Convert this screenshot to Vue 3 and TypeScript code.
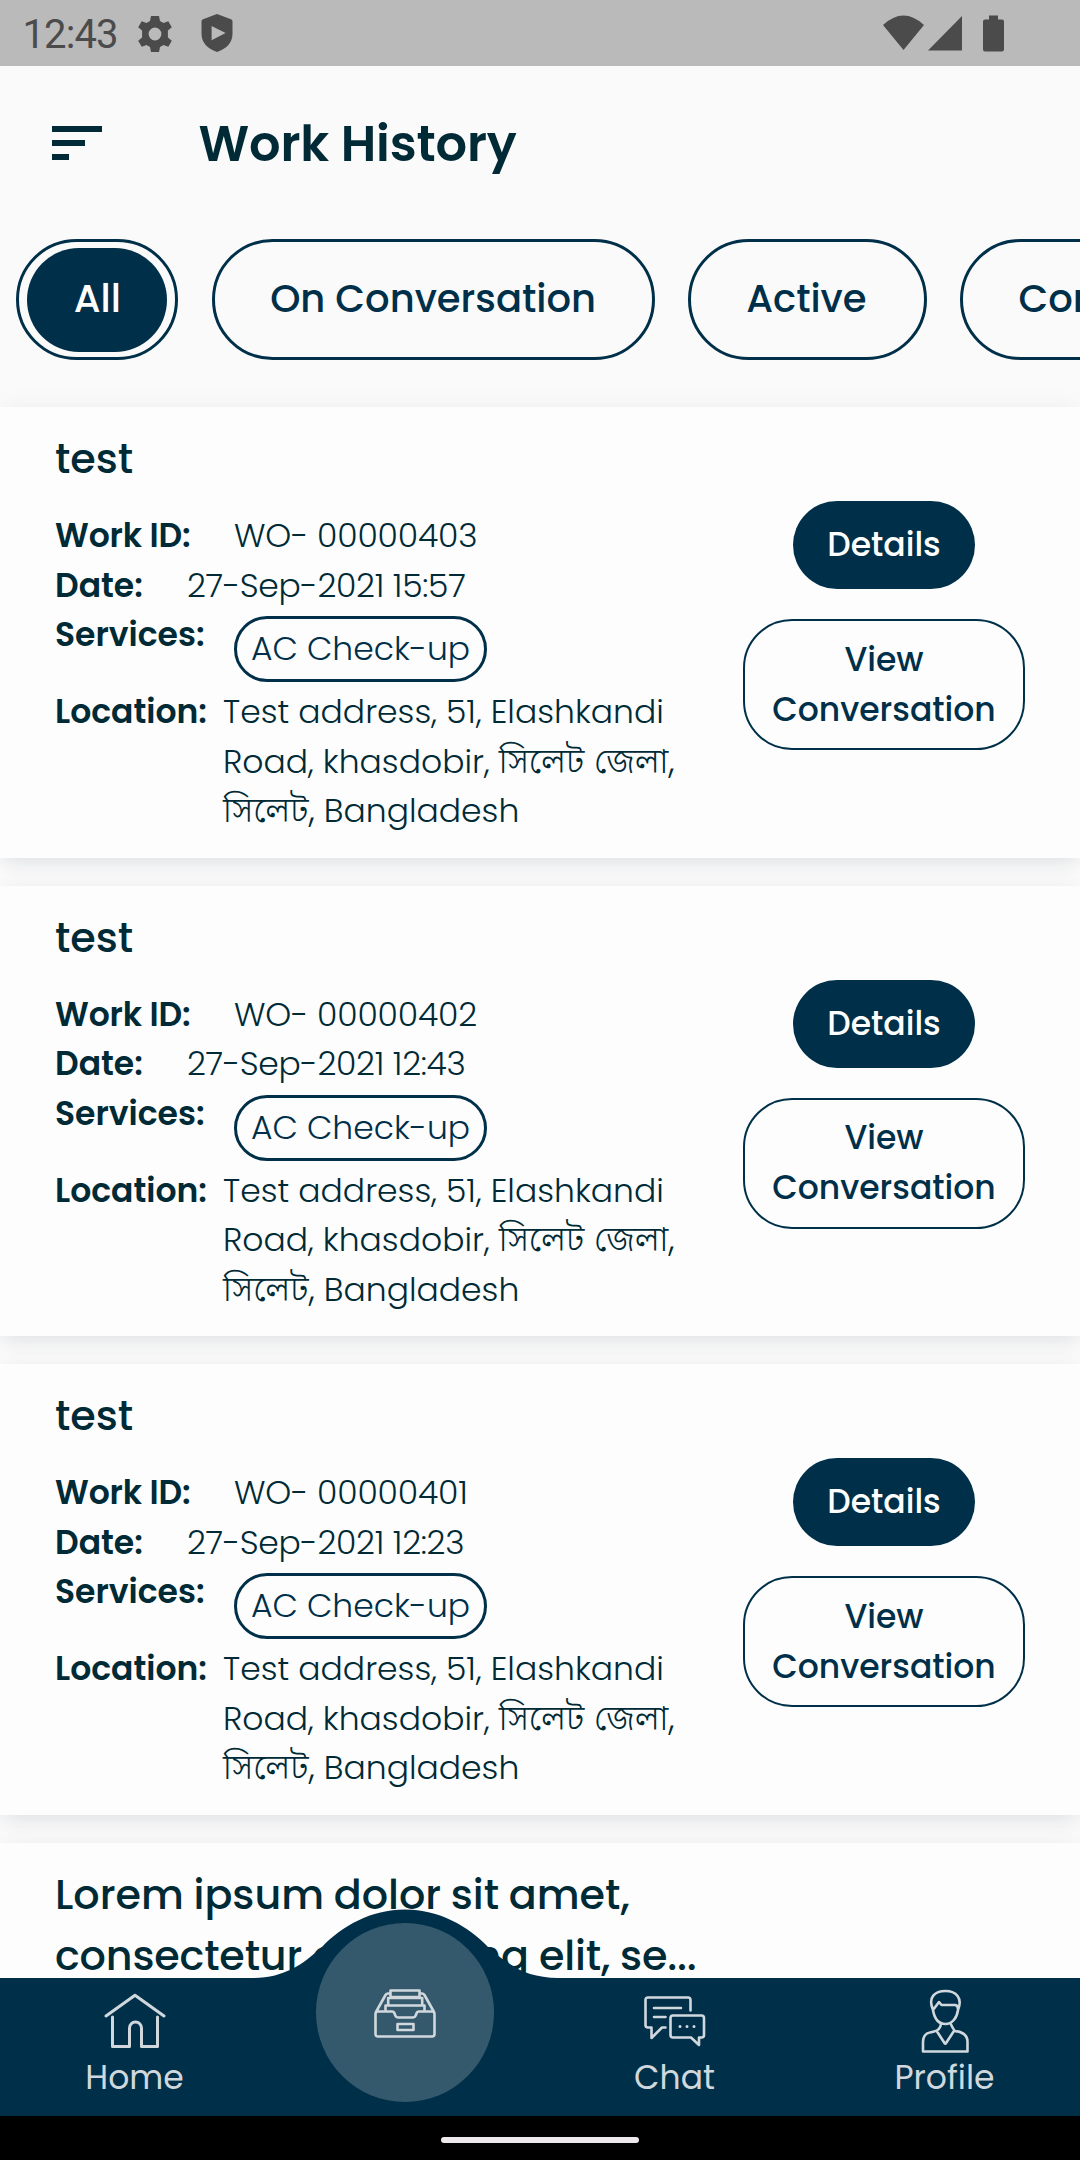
<script setup lang="ts">
interface Job {
  title: string[]
  id?: string
  date?: string
}

const filters: { label: string; key: string }[] = [
  { label: 'All', key: 'all' },
  { label: 'On Conversation', key: 'talk' },
  { label: 'Active', key: 'active' },
  { label: 'Completed', key: 'done' },
]

const jobs: Job[] = [
  { title: ['test'], id: 'WO- 00000403', date: '27-Sep-2021 15:57' },
  { title: ['test'], id: 'WO- 00000402', date: '27-Sep-2021 12:43' },
  { title: ['test'], id: 'WO- 00000401', date: '27-Sep-2021 12:23' },
  { title: ['Lorem ipsum dolor sit amet,', 'consectetur adipiscing elit, se...'] },
]
</script>

<template>
  <div class="screen">
    <div class="status">
      <span class="clock">12:43</span>
      <svg class="gear" width="34" height="36" viewBox="0 0 34 36">
        <path fill-rule="evenodd" d="M13 0h8l1 5 3.500 2 4.800-1.800 3.500 6-3.900 3.400v6.800l3.900 3.400-3.500 6L25.500 29 22 31l-1 5h-8l-1-5-3.500-2-4.800 1.800-3.500-6 3.900-3.400v-6.800L.2 11.200l3.500-6L8.500 7 12 5zM17 11.600a6.400 6.400 0 1 0 0 12.800a6.400 6.400 0 1 0 0-12.800z" />
      </svg>
      <svg class="shield" width="32" height="38" viewBox="0 0 32 38">
        <path fill-rule="evenodd" d="M16 0l14 5.200q1.500.6 1.500 2.200v12q0 13-15.500 18.600Q.5 32.400.5 19.400v-12q0-1.600 1.500-2.200zM10.600 12v14.200L24.600 19z" />
      </svg>
      <svg class="radio" width="122" height="38" viewBox="0 0 122 38">
        <path d="M0 10Q20.500-9 41 10L20.500 35z" />
        <path d="M45 35.500L79 1v34.500z" />
        <path d="M106 .5h9v4h4q2 0 2 2v28q0 2-2 2h-17q-2 0-2-2v-28q0-2 2-2h4z" />
      </svg>
    </div>

    <header class="topbar">
      <svg class="menu" width="50" height="34" viewBox="0 0 50 34">
        <path d="M0 0h50v6H0zM0 14h33v6H0zM0 28h17v6H0z" />
      </svg>
      <h1>Work History</h1>
    </header>

    <div class="filters">
      <button v-for="f in filters" :key="f.key" class="chip" :class="f.key"><span>{{ f.label }}</span></button>
    </div>

    <main class="list">
      <article v-for="(job, i) in jobs" :key="i" class="card">
        <div class="info">
          <h2><span v-for="t in job.title" :key="t">{{ t }}</span></h2>
          <template v-if="job.id">
            <div class="row"><b class="l-id">Work ID:</b><span class="id">{{ job.id }}</span></div>
            <div class="row"><b class="l-date">Date:</b><span class="date">{{ job.date }}</span></div>
            <div class="row services"><b class="l-serv">Services:</b><span class="service">AC Check-up</span></div>
            <div class="row">
              <b class="l-loc">Location:</b>
              <div class="address">
                <div>Test address, 51, Elashkandi</div>
                <div>Road, khasdobir, <span class="bn">সিলেট জেলা,</span></div>
                <div><span class="bn">সিলেট,</span> Bangladesh</div>
              </div>
            </div>
          </template>
        </div>
        <div v-if="job.id" class="actions">
          <button class="details">Details</button>
          <button class="view"><span>View</span><span>Conversation</span></button>
        </div>
      </article>
    </main>

    <nav class="tabs">
      <svg class="bump" width="306" height="72" viewBox="0 0 306 72">
        <path d="M0 69C32 69 50 56 70 38C90 17 119 .5 153 .5S216 17 236 38C256 56 274 69 306 69V72H0z" />
      </svg>
      <a class="tab">
        <svg width="62" height="62" viewBox="0 0 62 62" class="line">
          <path d="M2 27L31 6.200 60 27M8.500 28v29.500h17V39a5.500 5.500 0 0 1 12 0v18.500h16V28" />
        </svg>
        <span>Home</span>
      </a>
      <a class="tab">
        <span class="disc">
          <svg width="62" height="50" viewBox="0 0 62 50" class="line thin">
            <path d="M16.500 8V1.500h29V8M16.500 8h29M14.200 16V9h34v7M11.500 22.500V16.500h39v6M2 23L11.500 6q1-1.500 2.500-1.500h2M60 23L50.500 6q-1-1.500-2.500-1.500h-2M4 22.500h14q2 0 2.500 2l.8 2q.8 2 2.700 2h15q1.900 0 2.700-2l.8-2q.5-2 2.500-2h13q2.500 0 2.500 2.500v20q0 2.500-2.500 2.500H4q-2.500 0-2.500-2.500V25q0-2.500 2.500-2.500zM23.500 35h16v6h-16z" />
          </svg>
        </span>
      </a>
      <a class="tab">
        <svg width="62" height="62" viewBox="0 0 62 62" class="line thin">
          <path d="M46.500 21.500V11q0-2.500-2.500-2.500H4Q1.500 8.500 1.500 11v25q0 2.500 2.500 2.500h3.500V49L18 38.500h3.500M10 19h27M10 28h11.500M29 26.500h28.500q2.500 0 2.500 2.500v17q0 2.500-2.500 2.500h-2.500V56L47 48.500H29q-2.500 0-2.500-2.500V29q0-2.500 2.500-2.500z" />
          <path class="dots" d="M36 37.500h.01M43 37.500h.01M50 37.500h.01" />
        </svg>
        <span>Chat</span>
      </a>
      <a class="tab">
        <svg width="62" height="64" viewBox="0 0 62 64" class="line thin">
          <path d="M19 21C13.500 8 21 2 31.500 2S49 9 44 21C43 29 38 35 31.500 35S20.500 30 19 21L25 13l2.500 3h14q2.500 1 2.500 4M27 34.500Q26.500 41 20 42.500T13 44.500Q9 47 9 53v9.500h44.500V53q0-6-4.500-8.500T42.500 42.500 36.500 34.500M23 42.500L30.500 54q.8 1.300 1.600 0l7.500-11.500" />
        </svg>
        <span class="up">Profile</span>
      </a>
    </nav>
    <div class="gesture"><i></i></div>
  </div>
</template>

<style>
html,
body {
  margin: 0;
  background: #fafafa;
}
</style>

<style scoped>
.screen {
  width: 1080px;
  height: 2160px;
  display: flex;
  flex-direction: column;
  overflow: hidden;
  background: #fafafa;
  color: #002a35;
  font-family: Poppins, Inter, "Noto Sans Bengali", "Noto Sans", sans-serif;
}
span,
b,
h1 {
  white-space: nowrap;
}
.status {
  height: 66px;
  flex: none;
  display: flex;
  background: #bababa;
  fill: #4b4b4b;
  color: #4b4b4b;
}
.clock {
  width: 115.500px;
  padding-left: 22.500px;
  font: 400 40px/70px Roboto, sans-serif;
  letter-spacing: -0.900px;
}
.gear {
  margin-top: 16px;
}
.shield {
  margin: 14px 0 0 28.500px;
}
.radio {
  margin: 15px 75px 0 auto;
}
.topbar {
  height: 172.500px;
  flex: none;
  display: flex;
}
.menu {
  margin: 60px 96.500px 0 52px;
  fill: #002a35;
}
h1 {
  margin: 0;
  padding-top: 48px;
  font-size: 49.500px;
  font-weight: 600;
  line-height: 60px;
  letter-spacing: -0.150px;
}
.filters {
  height: 168.500px;
  flex: none;
  display: flex;
  gap: 33.300px;
  padding-left: 16.300px;
}
button {
  font-family: inherit;
  box-sizing: border-box;
  padding: 0;
  background: none;
  border: 0;
  flex: none;
}
.chip {
  height: 121.500px;
  border: 3px solid #003049;
  border-radius: 61px;
  color: #003049;
  font-size: 38.500px;
  font-weight: 500;
  line-height: 114px;
}
.all {
  width: 162px;
  padding: 6px 8px;
}
.all span {
  display: block;
  height: 104px;
  border-radius: 52px;
  background: #003049;
  color: #fff;
  line-height: 102px;
}
.talk {
  width: 443px;
}
.active {
  width: 239px;
}
.active span {
  margin-right: 2px;
}
.done {
  width: 335px;
}
.list {
  flex: 1;
  min-height: 0;
}
.card {
  height: 450.670px;
  margin-bottom: 28px;
  box-sizing: border-box;
  padding: 21px 0 0 55px;
  display: flex;
  background: #fdfdfd;
  box-shadow: 0 8px 18px -4px rgba(0, 48, 73, 0.09), 0 0 26px rgba(0, 48, 40, 0.045);
}
.card:last-child {
  height: 220px;
  margin: 0;
}
.info {
  width: 688px;
  flex: none;
}
h2 {
  margin: 0 0 22px;
  font-size: 41.250px;
  font-weight: 500;
  line-height: 61px;
}
h2 span {
  display: block;
  word-spacing: -1px;
}
h2 span + span {
  word-spacing: -0.500px;
  letter-spacing: -0.150px;
}
.row {
  display: flex;
  font-size: 33px;
  line-height: 49.500px;
  font-weight: 300;
}
.row b {
  font-weight: 600;
}
.id {
  letter-spacing: -0.160px;
}
.date {
  letter-spacing: -0.280px;
}
.l-id {
  width: 179px;
  letter-spacing: -0.150px;
}
.l-date {
  width: 132px;
}
.l-serv {
  width: 179px;
}
.l-loc {
  width: 168px;
}
.services {
  height: 77px;
}
.service {
  margin-top: 6px;
  box-sizing: border-box;
  width: 253px;
  height: 66px;
  border: 3px solid #003049;
  border-radius: 33px;
  text-align: center;
  color: #003049;
  line-height: 60px;
}
.address > div {
  height: 49.500px;
  white-space: nowrap;
}
.bn {
  font-size: 35px;
  line-height: 48px;
}
.actions {
  width: 282px;
  padding-top: 73px;
  display: flex;
  flex-direction: column;
  align-items: center;
  gap: 30px;
}
.details {
  width: 182px;
  height: 88px;
  border-radius: 44px;
  background: #003049;
  color: #fff;
  font-size: 33px;
  font-weight: 500;
  line-height: 86px;
}
.view {
  width: 282px;
  height: 131px;
  border: 2px solid #003049;
  border-radius: 49px;
  color: #003049;
  font-size: 33px;
  font-weight: 500;
  line-height: 50px;
}
.view span {
  display: block;
}
.tabs {
  position: relative;
  height: 138px;
  flex: none;
  display: flex;
  background: #003049;
}
.bump {
  position: absolute;
  left: 252px;
  top: -69px;
  fill: #003049;
}
.tab {
  width: 270px;
  display: flex;
  flex-direction: column;
  align-items: center;
  padding-top: 11px;
  color: #d0d8de;
  font-size: 33px;
  line-height: 50px;
}
.tab > span {
  margin: 2px 1px 0 0;
}
.tab > .up {
  margin-top: 0;
}
.line {
  fill: none;
  stroke: #d0d8de;
  stroke-width: 3px;
  stroke-linecap: round;
  stroke-linejoin: round;
}
.thin {
  stroke-width: 2.600px;
}
.dots {
  stroke-width: 3px;
}
.tab .disc {
  position: absolute;
  left: 316px;
  top: -55px;
  width: 178px;
  height: 179px;
  margin: 0;
  border-radius: 50%;
  background: #35596c;
  display: flex;
  justify-content: center;
}
.disc svg {
  margin-top: 66px;
}
.gesture {
  position: relative;
  height: 44px;
  flex: none;
  display: flex;
  justify-content: center;
  background: #000;
}
.gesture i {
  width: 198px;
  height: 6px;
  margin-top: 21px;
  border-radius: 3px;
  background: #ece8ec;
}
</style>
